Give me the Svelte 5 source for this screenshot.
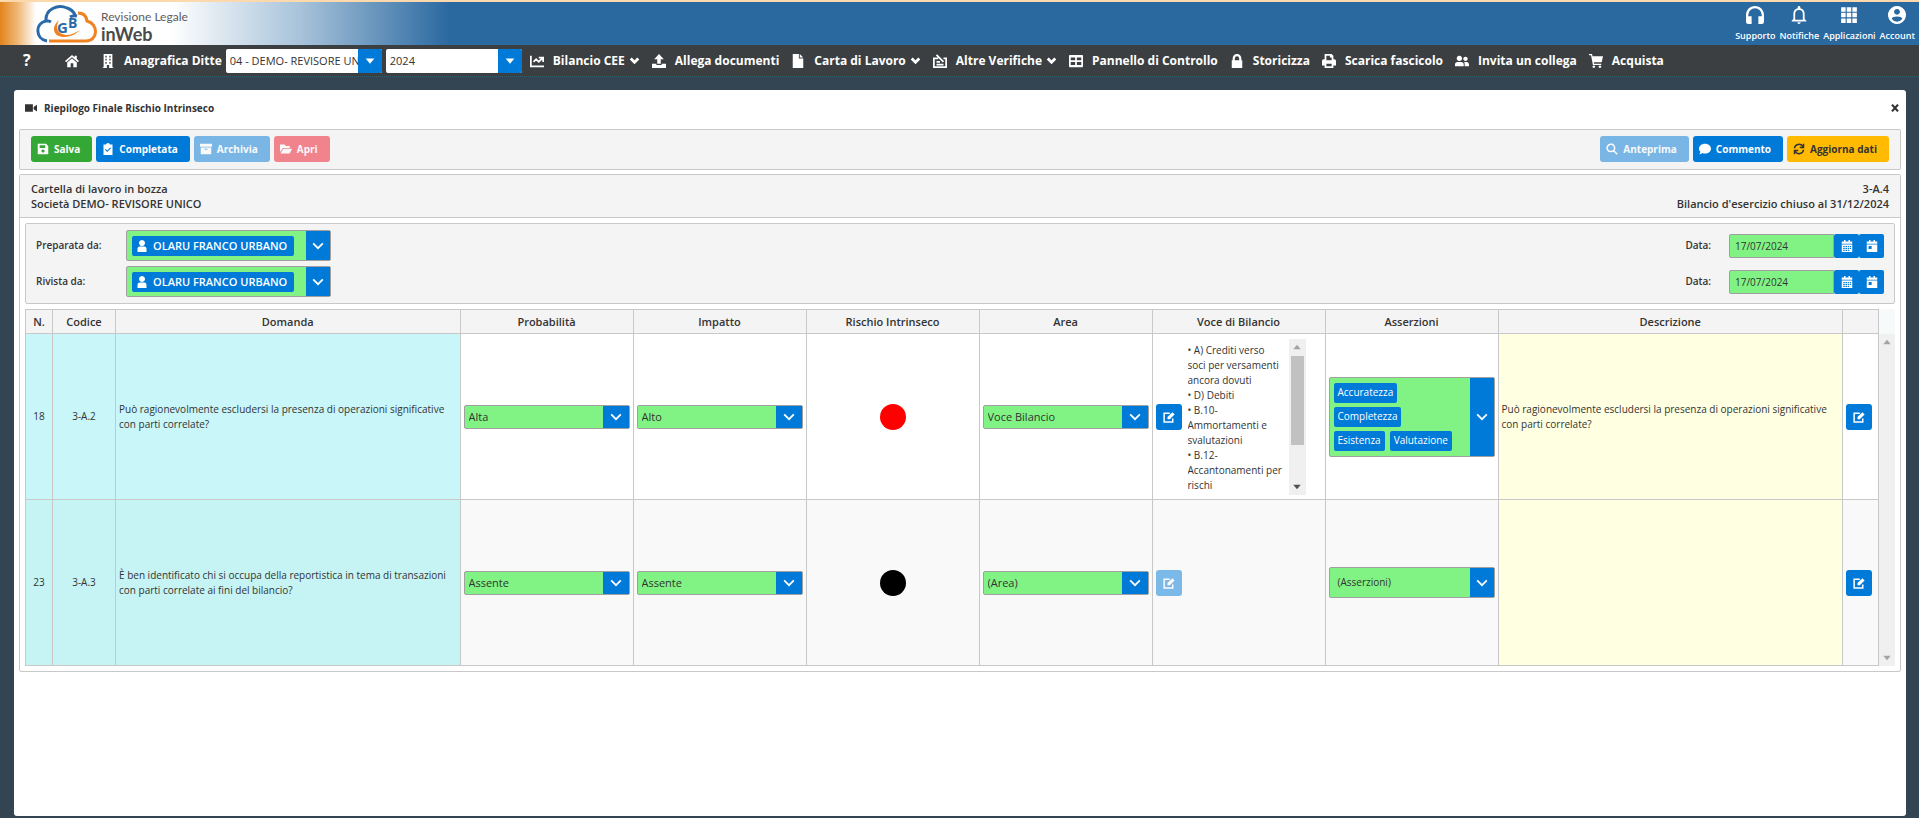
<script>
    const icons = {
        home: { d: 'M8 1 0 8 1.3 9.5 8 3.7 14.7 9.5 16 8 13.5 5.8V2H11V3.6zM8 5 2.5 9.8V15H6.5V10.5H9.5V15H13.5V9.8z' },
        building: { d: 'M3 0H13V15H14V16H9.3V12.5H6.7V16H2V15H3zM5 2V4H6.5V2zM9.5 2V4H11V2zM5 5.5V7.5H6.5V5.5zM9.5 5.5V7.5H11V5.5zM5 9V11H6.5V9zM9.5 9V11H11V9z' },
        chart: { s: 'M1 2V14H16M4 9 7 6 10 9 14 5M10 4H15V9' },
        upload: { d: 'M8 0 13.5 6H10V11H6V6H2.5zM0 11H5V12.5H11V11H16V16H0z' },
        file: { d: 'M2 0H9V5H14V16H2zM10 0 14 4H10z' },
        verify: { s: 'M6 5H1V15H15V5H12M4 12H12M4 9H8M4 1 12 9' },
        panel: { d: 'M1 1H15Q16 1 16 2V14Q16 15 15 15H1Q0 15 0 14V2Q0 1 1 1zM2 4V7H7V4zM9 4V7H14V4zM2 9V12.5H7V9zM9 9V12.5H14V9z' },
        lock: { d: 'M3 7V5a5 5 0 0 1 10 0V7H14V16H2V7zM5.5 7H10.5V5a2.5 2.5 0 0 0-5 0z' },
        print: { d: 'M3 0H11L13 2V6H14Q16 6 16 8V13H13V16H3V13H0V8Q0 6 2 6H3zM5 2V7H11V4H9V2zM5 11V14H11V11z' },
        users: { d: 'M5 2a3 3 0 1 1-.01 0zM0 14V12Q0 9 3 9H7Q10 9 10 12V14zM12 3a2.5 2.5 0 1 1-.01 0zM11 14H16V12Q16 9 13.5 9H10.5Q11.3 10.5 11 14z' },
        cart: { d: 'M0 0H3.5L4 2.5H16L14.5 9.5H5.5L5.8 11H14V12.5H4.5L2.3 1.5H0zM5.5 13a1.5 1.5 0 1 1-.01 0zM12.5 13a1.5 1.5 0 1 1-.01 0z' },
        save: { d: 'M1 1H12L15 4V15H1zM3.5 3V6.5H11V3zM8 8.5a2.2 2.2 0 1 0 .01 0z' },
        check: { d: 'M2 2H5.5a2.5 2 0 0 1 5 0H14V16H2zM4 9 7 12 12 7 11 6 7 10 5 8z' },
        archive: { d: 'M0 1H16V5H0zM1 6H15V15H1zM6 7.5V9H10V7.5z' },
        folder: { d: 'M0 2H6L8 4H13V6.5H4L0 12zM4.5 7.5H16L13 14H0.5z' },
        search: { s: 'M6.5 1.5a5 5 0 1 0 .01 0zM10 10 15 15' },
        comment: { d: 'M8 1C12.5 1 16 4 16 7.5S12.5 14 8 14Q6 14 4.5 13.3 3 15 0 15 1.8 13.5 1.8 11.5 0 10 0 7.5C0 4 3.5 1 8 1z' },
        sync: { s: 'M2 7A6 6 0 0 1 13 4.5M14 1V6H9M14 9A6 6 0 0 1 3 11.5M2 15V10H7' },
        user: { d: 'M8 0a4 4 0 1 1-.01 0zM2 16V12Q2 8.5 5 8.5H11Q14 8.5 14 12V16z' },
        calendar: { d: 'M4 0H6V2H10V0H12V2H15V5H1V2H4zM1 6H15V16H1zM3 8V9.5H5V8zM6 8V9.5H8V8zM9 8V9.5H11V8zM12 8V9.5H13.5V8zM3 10.5V12H5V10.5zM6 10.5V12H8V10.5zM9 10.5V12H11V10.5zM12 10.5V12H13.5V10.5zM3 13V14.5H5V13zM6 13V14.5H8V13zM9 13V14.5H11V13z' },
        today: { d: 'M4 0H6V2H10V0H12V2H15V5H1V2H4zM1 6H15V16H1zM3.5 8V12H7.5V8z' },
        edit: { d: 'M6 11V8L12.5 1.5 15.5 4.5 9 11z', s: 'M9 3H1.5V14.5H13V10' },
        video: { d: 'M0 3H10.5V13H0zM11.5 6.5 16 3.5V12.5L11.5 9.5z' },
        down: { s: 'M2.5 5 8 10.5 13.5 5' },
        caret: { d: 'M3 5H13L8 11z' },
        close: { s: 'M4 3.5 12 12.5M12 3.5 4 12.5' },
        headphones: { d: 'M8 0C3.5 0 0 3.5 0 8V14Q0 16 2 16H5V9H2V8a6 6 0 0 1 12 0V9H11V16H14Q16 16 16 14V8C16 3.5 12.5 0 8 0z' },
        bell: { d: 'M6.8 1.3a1.2 1.2 0 0 1 2.4 0V2Q13 3 13 7V11.5L14.5 13V13.7H1.5V13L3 11.5V7Q3 3 6.8 2zM8 3.5Q4.6 3.5 4.6 7V12.2H11.4V7Q11.4 3.5 8 3.5zM6.5 14.5H9.5Q9.5 16 8 16T6.5 14.5z' },
        grid: { d: 'M1 1H5V5H1zM6 1H10V5H6zM11 1H15V5H11zM1 6H5V10H1zM6 6H10V10H6zM11 6H15V10H11zM1 11H5V15H1zM6 11H10V15H6zM11 11H15V15H11z' },
        account: { d: 'M8 0a8 8 0 1 1-.01 0zM8 2.6a2.6 2.6 0 1 0 .01 0zM8 9.3Q4 9.3 3.2 11.4 5 14 8 14T12.8 11.4Q12 9.3 8 9.3z' }
    };

    const links = [
        { icon: 'headphones', text: 'Supporto' },
        { icon: 'bell', text: 'Notifiche' },
        { icon: 'grid', text: 'Applicazioni' },
        { icon: 'account', text: 'Account' }
    ];

    const menu = [
        { icon: 'chart', text: 'Bilancio CEE', sub: true },
        { icon: 'upload', text: 'Allega documenti' },
        { icon: 'file', text: 'Carta di Lavoro', sub: true },
        { icon: 'verify', text: 'Altre Verifiche', sub: true },
        { icon: 'panel', text: 'Pannello di Controllo' },
        { icon: 'lock', text: 'Storicizza' },
        { icon: 'print', text: 'Scarica fascicolo' },
        { icon: 'users', text: 'Invita un collega' },
        { icon: 'cart', text: 'Acquista' }
    ];

    const firme = [
        { id: 'preparata', label: 'Preparata da:', nome: 'OLARU FRANCO URBANO', data: '17/07/2024' },
        { id: 'rivista', label: 'Rivista da:', nome: 'OLARU FRANCO URBANO', data: '17/07/2024' }
    ];

    const colonne = ['N.', 'Codice', 'Domanda', 'Probabilità', 'Impatto', 'Rischio Intrinseco', 'Area', 'Voce di Bilancio', 'Asserzioni', 'Descrizione', ''];

    const righe = [
        {
            n: 18, codice: '3-A.2',
            domanda: 'Può ragionevolmente escludersi la presenza di operazioni significative con parti correlate?',
            probabilita: 'Alta', impatto: 'Alto', rischio: 'red', area: 'Voce Bilancio',
            voci: ['A) Crediti verso soci per versamenti ancora dovuti', 'D) Debiti', 'B.10- Ammortamenti e svalutazioni', 'B.12- Accantonamenti per rischi'],
            asserzioni: ['Accuratezza', 'Completezza', 'Esistenza', 'Valutazione'],
            descrizione: 'Può ragionevolmente escludersi la presenza di operazioni significative con parti correlate?'
        },
        {
            n: 23, codice: '3-A.3',
            domanda: 'È ben identificato chi si occupa della reportistica in tema di transazioni con parti correlate ai fini del bilancio?',
            probabilita: 'Assente', impatto: 'Assente', rischio: 'black', area: '(Area)',
            voci: [], asserzioni: [], descrizione: ''
        }
    ];
</script>

{#snippet icon(name)}
    <svg class="icon" viewBox="0 0 16 16" aria-hidden="true">
        {#if icons[name].d}<path d={icons[name].d} fill="currentColor" fill-rule="evenodd" />{/if}
        {#if icons[name].s}<path d={icons[name].s} fill="none" stroke="currentColor" stroke-width="2" />{/if}
    </svg>
{/snippet}

{#snippet scelta(label, value)}
    <div class="select">
        <select aria-label={label}><option>{value}</option></select>
        <span class="arrow">{@render icon('down')}</span>
    </div>
{/snippet}

<div class="page">
    <header>
        <a class="logo" href="#home" aria-label="Revisione Legale inWeb">
            <svg viewBox="0 0 62 38" aria-hidden="true">
                <path d="M11 36C-1 34-1 18 10 16 9 4 22-1 31 3Q37 5 39 10M9 16Q12 15 15 17M34 12Q37 10 41 11" fill="none" stroke="#2a6aa8" stroke-width="3" />
                <path d="M42 8Q50 8 51 16C63 19 62 36 50 36H13" fill="none" stroke="#ee8320" stroke-width="3" />
                <path d="M23 15C14 23 18 32 28 32 36 32 41 28 44 25 39 28 35 30 30 30 21 29 19 22 23 15z" fill="#ee8320" />
                <text x="21" y="28" font-size="15" font-weight="700" fill="#2a6aa8">G</text>
                <text x="32" y="23" font-size="14" font-weight="700" fill="#2a6aa8">B</text>
            </svg>
            <span class="brand"><small>Revisione Legale</small><b>inWeb</b></span>
        </a>
        <div class="links">
            {#each links as l}
                <a href="#{l.icon}">{@render icon(l.icon)}<span>{l.text}</span></a>
            {/each}
        </div>
    </header>

    <nav>
        <a class="help" href="#aiuto">?</a>
        <a class="home" href="#home" aria-label="Home">{@render icon('home')}</a>
        <a class="ditte" href="#ditte">{@render icon('building')}<span>Anagrafica Ditte</span></a>
        <div class="combo">
            <select aria-label="Ditta"><option>04 - DEMO- REVISORE UNICO</option></select>
            <span class="arrow">{@render icon('caret')}</span>
        </div>
        <div class="combo anno">
            <select aria-label="Anno"><option>2024</option></select>
            <span class="arrow">{@render icon('caret')}</span>
        </div>
        <div class="menu">
            {#each menu as m}
                <a href="#{m.icon}">
                    {@render icon(m.icon)}<span>{m.text}</span>
                    {#if m.sub}<span class="sub">{@render icon('down')}</span>{/if}
                </a>
            {/each}
        </div>
    </nav>

    <main>
        <div class="title">
            {@render icon('video')}
            <h1>Riepilogo Finale Rischio Intrinseco</h1>
            <button class="close" aria-label="Chiudi">{@render icon('close')}</button>
        </div>

        <div class="toolbar">
            <button class="btn green">{@render icon('save')}Salva</button>
            <button class="btn blue">{@render icon('check')}Completata</button>
            <button class="btn blue off" disabled>{@render icon('archive')}Archivia</button>
            <button class="btn red off" disabled>{@render icon('folder')}Apri</button>
            <span class="fill"></span>
            <button class="btn blue off" disabled>{@render icon('search')}Anteprima</button>
            <button class="btn blue">{@render icon('comment')}Commento</button>
            <button class="btn yellow">{@render icon('sync')}Aggiorna dati</button>
        </div>

        <section>
            <div class="info">
                <div>Cartella di lavoro in bozza<br>Società DEMO- REVISORE UNICO</div>
                <div class="right">3-A.4<br>Bilancio d'esercizio chiuso al 31/12/2024</div>
            </div>

            <div class="firme">
                {#each firme as f}
                    <div class="firma">
                        <span class="label" id="{f.id}-label">{f.label}</span>
                        <button class="multi persona" aria-labelledby="{f.id}-label">
                            <span class="tags"><span class="tag">{@render icon('user')}{f.nome}</span></span>
                            <span class="arrow">{@render icon('down')}</span>
                        </button>
                        <span class="fill"></span>
                        <label for="{f.id}-data">Data:</label>
                        <div class="date">
                            <input id="{f.id}-data" type="text" value={f.data}>
                            <button aria-label="Calendario">{@render icon('calendar')}</button>
                            <button aria-label="Oggi">{@render icon('today')}</button>
                        </div>
                    </div>
                {/each}
            </div>

            <div class="grid">
                <div class="rows">
                    <table>
                        <colgroup>
                            <col class="c-n"><col class="c-cod"><col>
                            <col class="c-m"><col class="c-m"><col class="c-m"><col class="c-m"><col class="c-m"><col class="c-m">
                            <col><col class="c-ed">
                        </colgroup>
                        <thead>
                            <tr>{#each colonne as c}<th>{c}</th>{/each}</tr>
                        </thead>
                        <tbody>
                            {#each righe as r}
                                <tr>
                                    <td class="cyan mid">{r.n}</td>
                                    <td class="cyan mid">{r.codice}</td>
                                    <td class="cyan">{r.domanda}</td>
                                    <td>{@render scelta('Probabilità', r.probabilita)}</td>
                                    <td>{@render scelta('Impatto', r.impatto)}</td>
                                    <td><div class="dot" style="background: {r.rischio}"></div></td>
                                    <td>{@render scelta('Area', r.area)}</td>
                                    <td>
                                        <div class="voce">
                                            <button class="edit" aria-label="Modifica voce" disabled={!r.voci.length}>{@render icon('edit')}</button>
                                            {#if r.voci.length}
                                                <div class="list">
                                                    <div>{#each r.voci as v}<p>• {v}</p>{/each}</div>
                                                    <div class="scroll">{@render icon('caret')}<span class="thumb"></span><span class="fill"></span>{@render icon('caret')}</div>
                                                </div>
                                            {/if}
                                        </div>
                                    </td>
                                    <td>
                                        <button class="multi" aria-label="Asserzioni">
                                            <span class="tags">
                                                {#each r.asserzioni as a}<span class="tag">{a}</span>{:else}<span class="empty">(Asserzioni)</span>{/each}
                                            </span>
                                            <span class="arrow">{@render icon('down')}</span>
                                        </button>
                                    </td>
                                    <td class="yellow-cell">{r.descrizione}</td>
                                    <td><button class="edit" aria-label="Modifica riga">{@render icon('edit')}</button></td>
                                </tr>
                            {/each}
                        </tbody>
                    </table>
                </div>
                <div class="bar">
                    <span class="corner"></span>
                    <div class="scroll idle">{@render icon('caret')}<span class="fill"></span>{@render icon('caret')}</div>
                </div>
            </div>
        </section>
    </main>
</div>

<style>
    :global(body){
        background: #334553;
    }
    *{box-sizing: border-box;}
    .page{
        min-height: 100vh;
        display: flex;
        flex-direction: column;
        font-family: 'Open Sans', sans-serif;
        font-size: 10px;
        line-height: 15px;
        color: #333;
    }
    a{
        color: white;
        text-decoration: none;
    }
    button, input, select{
        font: inherit;
        color: inherit;
        margin: 0;
        border: none;
        padding: 0;
        background: none;
    }
    button{cursor: pointer;}
    .icon{
        width: 12px;
        height: 12px;
        flex: none;
        display: block;
    }
    .fill{flex: 1;}

    header{
        height: 45px;
        border-top: 2px solid #fbd9ad;
        padding: 0 4px 0 36px;
        display: flex;
        justify-content: space-between;
        background: linear-gradient(90deg, #e2841c 0, #f0b878 18px, white 36px, white 170px, #a8c3da 300px, #2a68a0 450px);
    }
    .logo{
        display: flex;
        align-items: center;
        gap: 3px;
    }
    .logo svg{
        width: 62px;
        height: 38px;
    }
    .brand{
        display: flex;
        flex-direction: column;
        font-family: Lato, sans-serif;
        color: #4a4a4c;
        padding-top: 5px;
    }
    .brand small{
        font-size: 12px;
        font-weight: 400;
        line-height: 16px;
        color: #5c5c60;
    }
    .brand b{
        font-size: 18px;
        line-height: 18px;
    }
    .links{
        display: flex;
        gap: 4px;
        padding-top: 4px;
    }
    .links a{
        display: flex;
        flex-direction: column;
        align-items: center;
        gap: 4px;
        font-size: 9px;
        font-weight: 600;
    }
    .links .icon{
        width: 18px;
        height: 18px;
    }

    nav{
        min-height: 32px;
        background: #3c3f41;
        border-bottom: 1px dotted #33606a;
        display: flex;
        align-items: center;
        padding-left: 23px;
        font-size: 12px;
        font-weight: 700;
    }
    nav a{
        display: flex;
        align-items: center;
        white-space: nowrap;
    }
    nav .icon{
        width: 14px;
        height: 14px;
    }
    .help{
        font-size: 16px;
        width: 42px;
    }
    .home{width: 36px;}
    .ditte{
        gap: 9px;
        margin-right: 4px;
    }
    .menu{
        display: flex;
        gap: 12px;
        margin-left: 8px;
    }
    .menu a{gap: 9px;}
    .sub{margin-left: -5px;}
    .sub .icon{
        width: 11px;
        height: 11px;
    }
    .sub path{stroke-width: 4;}
    .combo{
        width: 156px;
        height: 24px;
        display: flex;
        background: white;
        border-radius: 2px;
        overflow: hidden;
        margin-right: 4px;
        font-size: 11px;
        font-weight: 400;
    }
    .anno{
        width: 136px;
        margin-right: 0;
    }
    .combo select, .select select{
        appearance: none;
        flex: 1;
        min-width: 0;
        padding-left: 4px;
        border-radius: 0;
    }
    .combo select{text-overflow: clip;}
    .arrow{
        flex: none;
        width: 24px;
        display: flex;
        align-items: center;
        justify-content: center;
        background: #007ad9;
        color: white;
    }
    .select .icon, .multi .arrow .icon{
        width: 14px;
        height: 14px;
    }

    main{
        flex: 1;
        margin: 13px 13px 2px 14px;
        background: white;
        border-radius: 3px;
        padding: 0 5px;
    }
    .title{
        height: 39px;
        display: flex;
        align-items: center;
        gap: 7px;
        padding: 0 0 3px 6px;
    }
    .title h1{
        flex: 1;
        margin: 0;
        font-size: 10px;
        font-weight: 700;
    }
    .close path{stroke-width: 3;}
    .toolbar{
        display: flex;
        gap: 4px;
        padding: 6px 11px;
        height: 41px;
        background: #f4f4f4;
        border: 1px solid #c8c8c8;
        border-radius: 2px;
    }
    .btn{
        display: flex;
        align-items: center;
        gap: 5px;
        height: 26px;
        padding: 0 12px 0 6px;
        border-radius: 3px;
        color: white;
        font-weight: 700;
    }
    .green{background: #34a835;}
    .blue{background: #007ad9;}
    .red{background: #f01428;}
    .yellow{
        background: #ffba01;
        color: #333;
    }
    .off{opacity: 0.5;}

    section{
        margin-top: 4px;
        border: 1px solid #c8c8c8;
        border-radius: 2px;
    }
    .info{
        display: flex;
        justify-content: space-between;
        padding: 6px 11px;
        background: #f4f4f4;
        border-bottom: 1px solid #c8c8c8;
        font-size: 11px;
        font-weight: 600;
    }
    .right{text-align: right;}
    .firme{
        margin: 5px;
        padding: 6px 10px;
        display: grid;
        gap: 5px;
        background: #f4f4f4;
        border: 1px solid #c8c8c8;
        border-radius: 2px;
    }
    .firma{
        display: flex;
        align-items: center;
        font-weight: 600;
    }
    .label{width: 90px;}
    .firma label{margin-right: 18px;}
    .multi{
        display: flex;
        align-items: stretch;
        width: 100%;
        min-height: 31px;
        background: #80f384;
        border: 1px solid #a0a0a0;
        border-radius: 2px;
        text-align: left;
    }
    .tags{
        flex: 1;
        display: flex;
        flex-wrap: wrap;
        align-items: center;
        gap: 4px 5px;
        padding: 5px 17px 5px 4px;
    }
    .tag{
        display: flex;
        align-items: center;
        height: 20px;
        padding: 0 4px;
        background: #007ad9;
        color: white;
        border-radius: 2px;
        font-size: 10px;
    }
    .persona{width: 205px;}
    .persona .tags{padding: 4px 5px;}
    .persona .tag{
        padding: 0 7px 0 4px;
        gap: 5px;
        font-size: 11px;
        white-space: nowrap;
    }
    .empty{padding-left: 4px;}
    .date{display: flex;}
    .date input{
        width: 105px;
        height: 24px;
        padding-left: 5px;
        background: #80f384;
        border: 1px solid #a0a0a0;
        border-radius: 2px 0 0 2px;
        font-weight: 400;
    }
    .date button{
        width: 25px;
        height: 24px;
        display: flex;
        align-items: center;
        justify-content: center;
        background: #007ad9;
        color: white;
        border-radius: 2px;
    }

    .grid{
        display: flex;
        margin: 5px;
    }
    .rows{
        flex: 1;
        min-width: 0;
    }
    table{
        width: 100%;
        table-layout: fixed;
        border-collapse: collapse;
    }
    .c-n{width: 27px;}
    .c-cod{width: 63px;}
    .c-m{width: 173px;}
    .c-ed{width: 36px;}
    th, td{
        border: 1px solid #c8c8c8;
        padding: 0 3px;
    }
    th{
        height: 24px;
        background: #f4f4f4;
        font-size: 11px;
        font-weight: 600;
        padding: 0;
    }
    td{
        height: 166px;
        background: white;
    }
    tr:nth-child(even) td{background: #f9f9f9;}
    tr td.cyan{background: #c9f6f9;}
    tr:nth-child(even) td.cyan{background: #c6f3f4;}
    tr td.yellow-cell, tr:nth-child(even) td.yellow-cell{background: #ffffe1;}
    .mid{text-align: center;}
    .select{
        display: flex;
        height: 24px;
        background: #80f384;
        border: 1px solid #a0a0a0;
        border-radius: 2px;
        font-size: 11px;
    }
    .select .arrow{width: 26px;}
    .dot{
        width: 26px;
        height: 26px;
        border-radius: 50%;
        margin: 0 auto;
    }
    .edit{
        width: 26px;
        height: 26px;
        display: flex;
        align-items: center;
        justify-content: center;
        background: #007ad9;
        color: white;
        border-radius: 3px;
    }
    .edit:disabled{opacity: 0.5;}
    .voce{
        display: flex;
        align-items: center;
        gap: 6px;
    }
    .list{
        display: flex;
        width: 118px;
        height: 156px;
    }
    .list > div:first-child{
        flex: 1;
        padding: 4px 4px 0 0;
        overflow: hidden;
    }
    .list p{margin: 0;}
    .scroll{
        width: 17px;
        flex: none;
        display: flex;
        flex-direction: column;
        align-items: center;
        padding: 2px 0;
        background: #f0f0f0;
        color: #505050;
    }
    .scroll .icon:first-child{
        transform: rotate(180deg);
        color: #a3a3a3;
    }
    .thumb{
        width: 13px;
        height: 89px;
        margin-top: 3px;
        background: #c1c1c1;
    }
    .bar{
        width: 16px;
        flex: none;
        display: flex;
        flex-direction: column;
    }
    .corner{
        height: 25px;
        background: #f7fafb;
    }
    .idle{
        flex: 1;
        width: 16px;
        color: #a3a3a3;
    }
</style>
